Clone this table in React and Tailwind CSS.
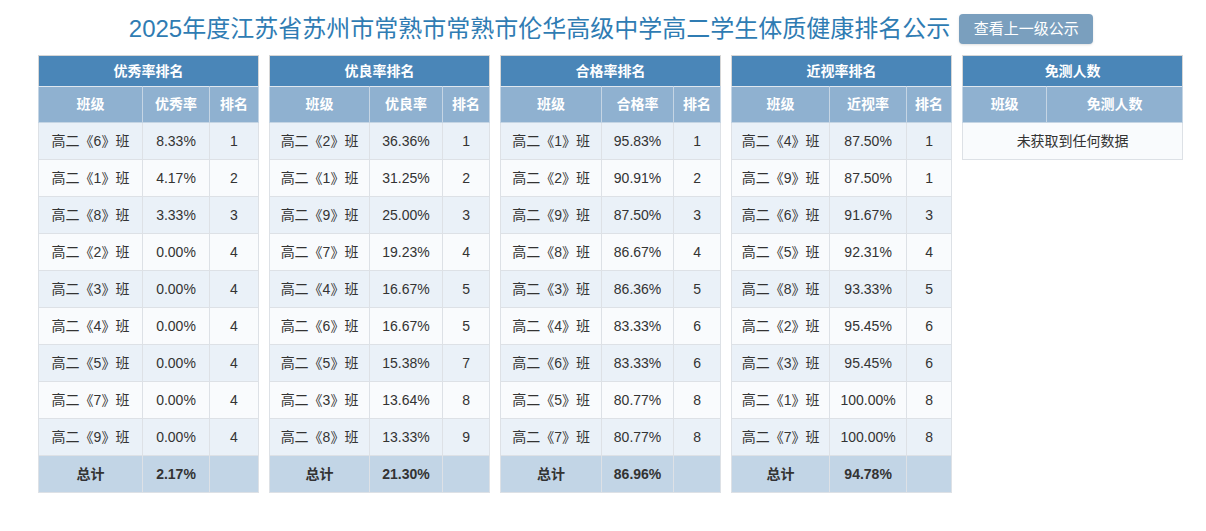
import React from 'react'

const tables = [
    {
        title: '优秀率排名',
        col: '优秀率',
        widths: ['w-[104px]', 'w-[67px]', 'w-[49px]'],
        rows: [
            ['高二《6》班', '8.33%', 1],
            ['高二《1》班', '4.17%', 2],
            ['高二《8》班', '3.33%', 3],
            ['高二《2》班', '0.00%', 4],
            ['高二《3》班', '0.00%', 4],
            ['高二《4》班', '0.00%', 4],
            ['高二《5》班', '0.00%', 4],
            ['高二《7》班', '0.00%', 4],
            ['高二《9》班', '0.00%', 4],
        ],
        total: '2.17%',
    },
    {
        title: '优良率排名',
        col: '优良率',
        widths: ['w-[100px]', 'w-[73px]', 'w-[47px]'],
        rows: [
            ['高二《2》班', '36.36%', 1],
            ['高二《1》班', '31.25%', 2],
            ['高二《9》班', '25.00%', 3],
            ['高二《7》班', '19.23%', 4],
            ['高二《4》班', '16.67%', 5],
            ['高二《6》班', '16.67%', 5],
            ['高二《5》班', '15.38%', 7],
            ['高二《3》班', '13.64%', 8],
            ['高二《8》班', '13.33%', 9],
        ],
        total: '21.30%',
    },
    {
        title: '合格率排名',
        col: '合格率',
        widths: ['w-[101px]', 'w-[72px]', 'w-[47px]'],
        rows: [
            ['高二《1》班', '95.83%', 1],
            ['高二《2》班', '90.91%', 2],
            ['高二《9》班', '87.50%', 3],
            ['高二《8》班', '86.67%', 4],
            ['高二《3》班', '86.36%', 5],
            ['高二《4》班', '83.33%', 6],
            ['高二《6》班', '83.33%', 6],
            ['高二《5》班', '80.77%', 8],
            ['高二《7》班', '80.77%', 8],
        ],
        total: '86.96%',
    },
    {
        title: '近视率排名',
        col: '近视率',
        widths: ['w-[98px]', 'w-[77px]', 'w-[45px]'],
        rows: [
            ['高二《4》班', '87.50%', 1],
            ['高二《9》班', '87.50%', 1],
            ['高二《6》班', '91.67%', 3],
            ['高二《5》班', '92.31%', 4],
            ['高二《8》班', '93.33%', 5],
            ['高二《2》班', '95.45%', 6],
            ['高二《3》班', '95.45%', 6],
            ['高二《1》班', '100.00%', 8],
            ['高二《7》班', '100.00%', 8],
        ],
        total: '94.78%',
    },
]

const cell = 'border border-[#dde1e6] text-center p-0'

const RankTable = ({ t }) => (
    <table className="w-[220px] table-fixed border-collapse border border-[#d6d6d6] text-[14px]">
        <colgroup>
            {t.widths.map((w, i) => (
                <col key={i} className={w} />
            ))}
        </colgroup>
        <thead>
            <tr className="h-[31px] bg-[#4a86b8] text-white">
                <th colSpan={3} className="font-bold text-center">
                    {t.title}
                </th>
            </tr>
            <tr className="h-[36px] bg-[#8fb1d0] text-white">
                <th className="border border-[#c5d5e4] border-t-[#dfe7ef] font-bold">班级</th>
                <th className="border border-[#c5d5e4] border-t-[#dfe7ef] font-bold">{t.col}</th>
                <th className="border border-[#c5d5e4] border-t-[#dfe7ef] font-bold">排名</th>
            </tr>
        </thead>
        <tbody className="text-[#333]">
            {t.rows.map((r, i) => (
                <tr
                    key={i}
                    className={`h-[37px] ${i % 2 === 0 ? 'bg-[#eaf1f8]' : 'bg-[#f9fbfd]'}`}
                >
                    <td className={cell}>{r[0]}</td>
                    <td className={cell}>{r[1]}</td>
                    <td className={cell}>{r[2]}</td>
                </tr>
            ))}
            <tr className="h-[37px] bg-[#c2d5e6] font-bold">
                <td className={cell}>总计</td>
                <td className={cell}>{t.total}</td>
                <td className={cell}></td>
            </tr>
        </tbody>
    </table>
)

const App = () => {
    return (
        <div
            className="w-[1206px] min-h-[531px] bg-white"
            style={{ fontFamily: '"Liberation Sans", "Noto Sans CJK SC", sans-serif' }}
        >
            <div className="flex items-center justify-center pt-[3px] h-[55px] pl-[16px]">
                <h1 className="text-[24px] leading-[32px] text-[#2f7cb3] font-normal">
                    2025年度江苏省苏州市常熟市常熟市伦华高级中学高二学生体质健康排名公示
                </h1>
                <button className="ml-[9px] h-[30px] w-[134px] rounded-[4px] bg-[#7a9fbe] text-white text-[15px] shadow-sm">
                    查看上一级公示
                </button>
            </div>
            <div className="flex gap-[10px] pl-[38px] items-start">
                {tables.map((t, i) => (
                    <RankTable key={i} t={t} />
                ))}
                <table className="w-[220px] table-fixed border-collapse border border-[#d6d6d6] text-[14px]">
                    <colgroup>
                        <col className="w-[84px]" />
                        <col className="w-[136px]" />
                    </colgroup>
                    <thead>
                        <tr className="h-[31px] bg-[#4a86b8] text-white">
                            <th colSpan={2} className="font-bold text-center">
                                免测人数
                            </th>
                        </tr>
                        <tr className="h-[36px] bg-[#8fb1d0] text-white">
                            <th className="border border-[#c5d5e4] border-t-[#dfe7ef] font-bold">班级</th>
                            <th className="border border-[#c5d5e4] border-t-[#dfe7ef] font-bold">免测人数</th>
                        </tr>
                    </thead>
                    <tbody className="text-[#333]">
                        <tr className="h-[37px] bg-[#f9fbfd]">
                            <td colSpan={2} className={cell}>
                                未获取到任何数据
                            </td>
                        </tr>
                    </tbody>
                </table>
            </div>
        </div>
    )
}

export default App
